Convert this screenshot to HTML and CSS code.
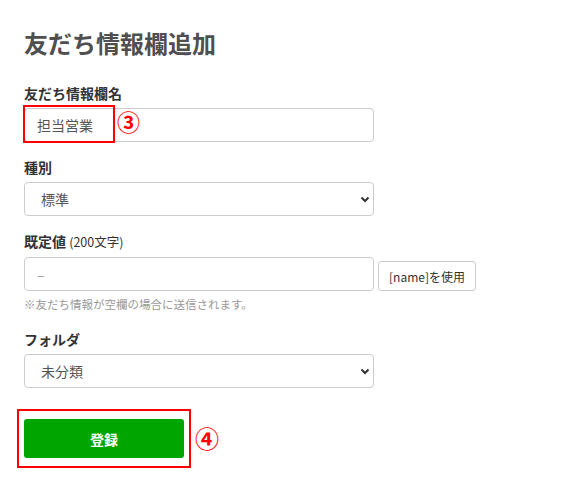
FILE: index.html
```html
<!DOCTYPE html>
<html lang="ja">
<head>
<meta charset="utf-8">
<title>友だち情報欄追加</title>
<link rel="stylesheet" href="styles.css">
</head>
<body>
<div class="page">
  <h1 class="title">友だち情報欄追加</h1>

  <div class="group">
    <label class="label">友だち情報欄名</label>
    <div class="annot-wrap">
      <input class="control" type="text" value="担当営業">
      <span class="redbox redbox-name"></span>
      <span class="num num-3">③</span>
    </div>
  </div>

  <div class="group">
    <label class="label">種別</label>
    <div class="select-wrap">
      <select class="control select"><option>標準</option></select>
      <svg class="chev" width="10" height="7" viewBox="0 0 10 7"><path d="M1.5 1.5 L5 5 L8.5 1.5" fill="none" stroke="#333" stroke-width="2"/></svg>
    </div>
  </div>

  <div class="group">
    <label class="label">既定値 <span class="sub">(200文字)</span></label>
    <div class="row">
      <input class="control" type="text" placeholder="–">
      <button class="btn-small" type="button">[name]を使用</button>
    </div>
    <p class="note">※友だち情報が空欄の場合に送信されます。</p>
  </div>

  <div class="group group-folder">
    <label class="label">フォルダ</label>
    <div class="select-wrap">
      <select class="control select"><option>未分類</option></select>
      <svg class="chev" width="10" height="7" viewBox="0 0 10 7"><path d="M1.5 1.5 L5 5 L8.5 1.5" fill="none" stroke="#333" stroke-width="2"/></svg>
    </div>
  </div>

  <div class="submit-row">
    <div class="annot-wrap">
      <button class="btn-submit" type="button">登録</button>
      <span class="redbox redbox-submit"></span>
    </div>
    <span class="num num-4">④</span>
  </div>
</div>
</body>
</html>
```

FILE: styles.css
```css
* { box-sizing: border-box; }
html, body { margin: 0; padding: 0; background: #fff; }
body {
  font-family: "Noto Sans CJK JP", sans-serif;
  color: #333;
}
.page {
  padding: 27px 24px 23px 24px;
}
.title {
  margin: 0 0 24px 0;
  font-size: 24px;
  line-height: 32px;
  font-weight: 700;
  color: #4f4f4f;
}
.group {
  margin-bottom: 15px;
}
.group-folder { margin-top: 17px; margin-bottom: 31px; }
.label {
  display: block;
  font-size: 14px;
  line-height: 20px;
  font-weight: 700;
  color: #333;
  margin-bottom: 5px;
}
.sub {
  font-size: 12.5px;
  font-weight: 400;
}
.control {
  display: block;
  width: 350px;
  height: 34px;
  border: 1px solid #ccc;
  border-radius: 4px;
  padding: 0 12px;
  font-size: 14px;
  font-family: "Noto Sans CJK JP", sans-serif;
  color: #555;
  background: #fff;
  outline: none;
}
.control::placeholder { color: #999; }
.annot-wrap { position: relative; display: inline-block; vertical-align: top; }
.redbox {
  position: absolute;
  border: 2px solid #f00;
  pointer-events: none;
}
.redbox-name { left: -1px; top: -3px; width: 92px; height: 38px; }
.redbox-submit { left: -7px; top: -10px; right: -7px; bottom: -10px; }
.num {
  color: #f00;
  font-weight: 700;
  line-height: 1;
}
.num-3 {
  position: absolute;
  left: 93px;
  top: 2px;
  font-size: 23px;
}
.select-wrap { position: relative; width: 350px; }
.select {
  -webkit-appearance: none;
  appearance: none;
  padding-left: 16px;
}
.chev {
  position: absolute;
  right: 4px;
  top: 14px;
  pointer-events: none;
}
.row {
  display: flex;
  align-items: flex-end;
  gap: 4px;
}
.btn-small {
  height: 30px;
  width: 98px;
  border: 1px solid #ccc;
  border-radius: 3px;
  background: #fff;
  color: #333;
  font-size: 12px;
  font-family: "Noto Sans CJK JP", sans-serif;
  padding: 0;
}
.note {
  margin: 5px 0 0 0;
  font-size: 11.5px;
  line-height: 16px;
  color: #999;
}
.submit-row {
  display: flex;
  align-items: center;
  gap: 11px;
}
.btn-submit {
  display: block;
  width: 160px;
  height: 39px;
  border: none;
  border-radius: 3px;
  background: #00a500;
  color: #fff;
  font-size: 14px;
  font-weight: 700;
  font-family: "Noto Sans CJK JP", sans-serif;
}
.num-4 {
  font-size: 24px;
  margin-top: -2px;
}
```
